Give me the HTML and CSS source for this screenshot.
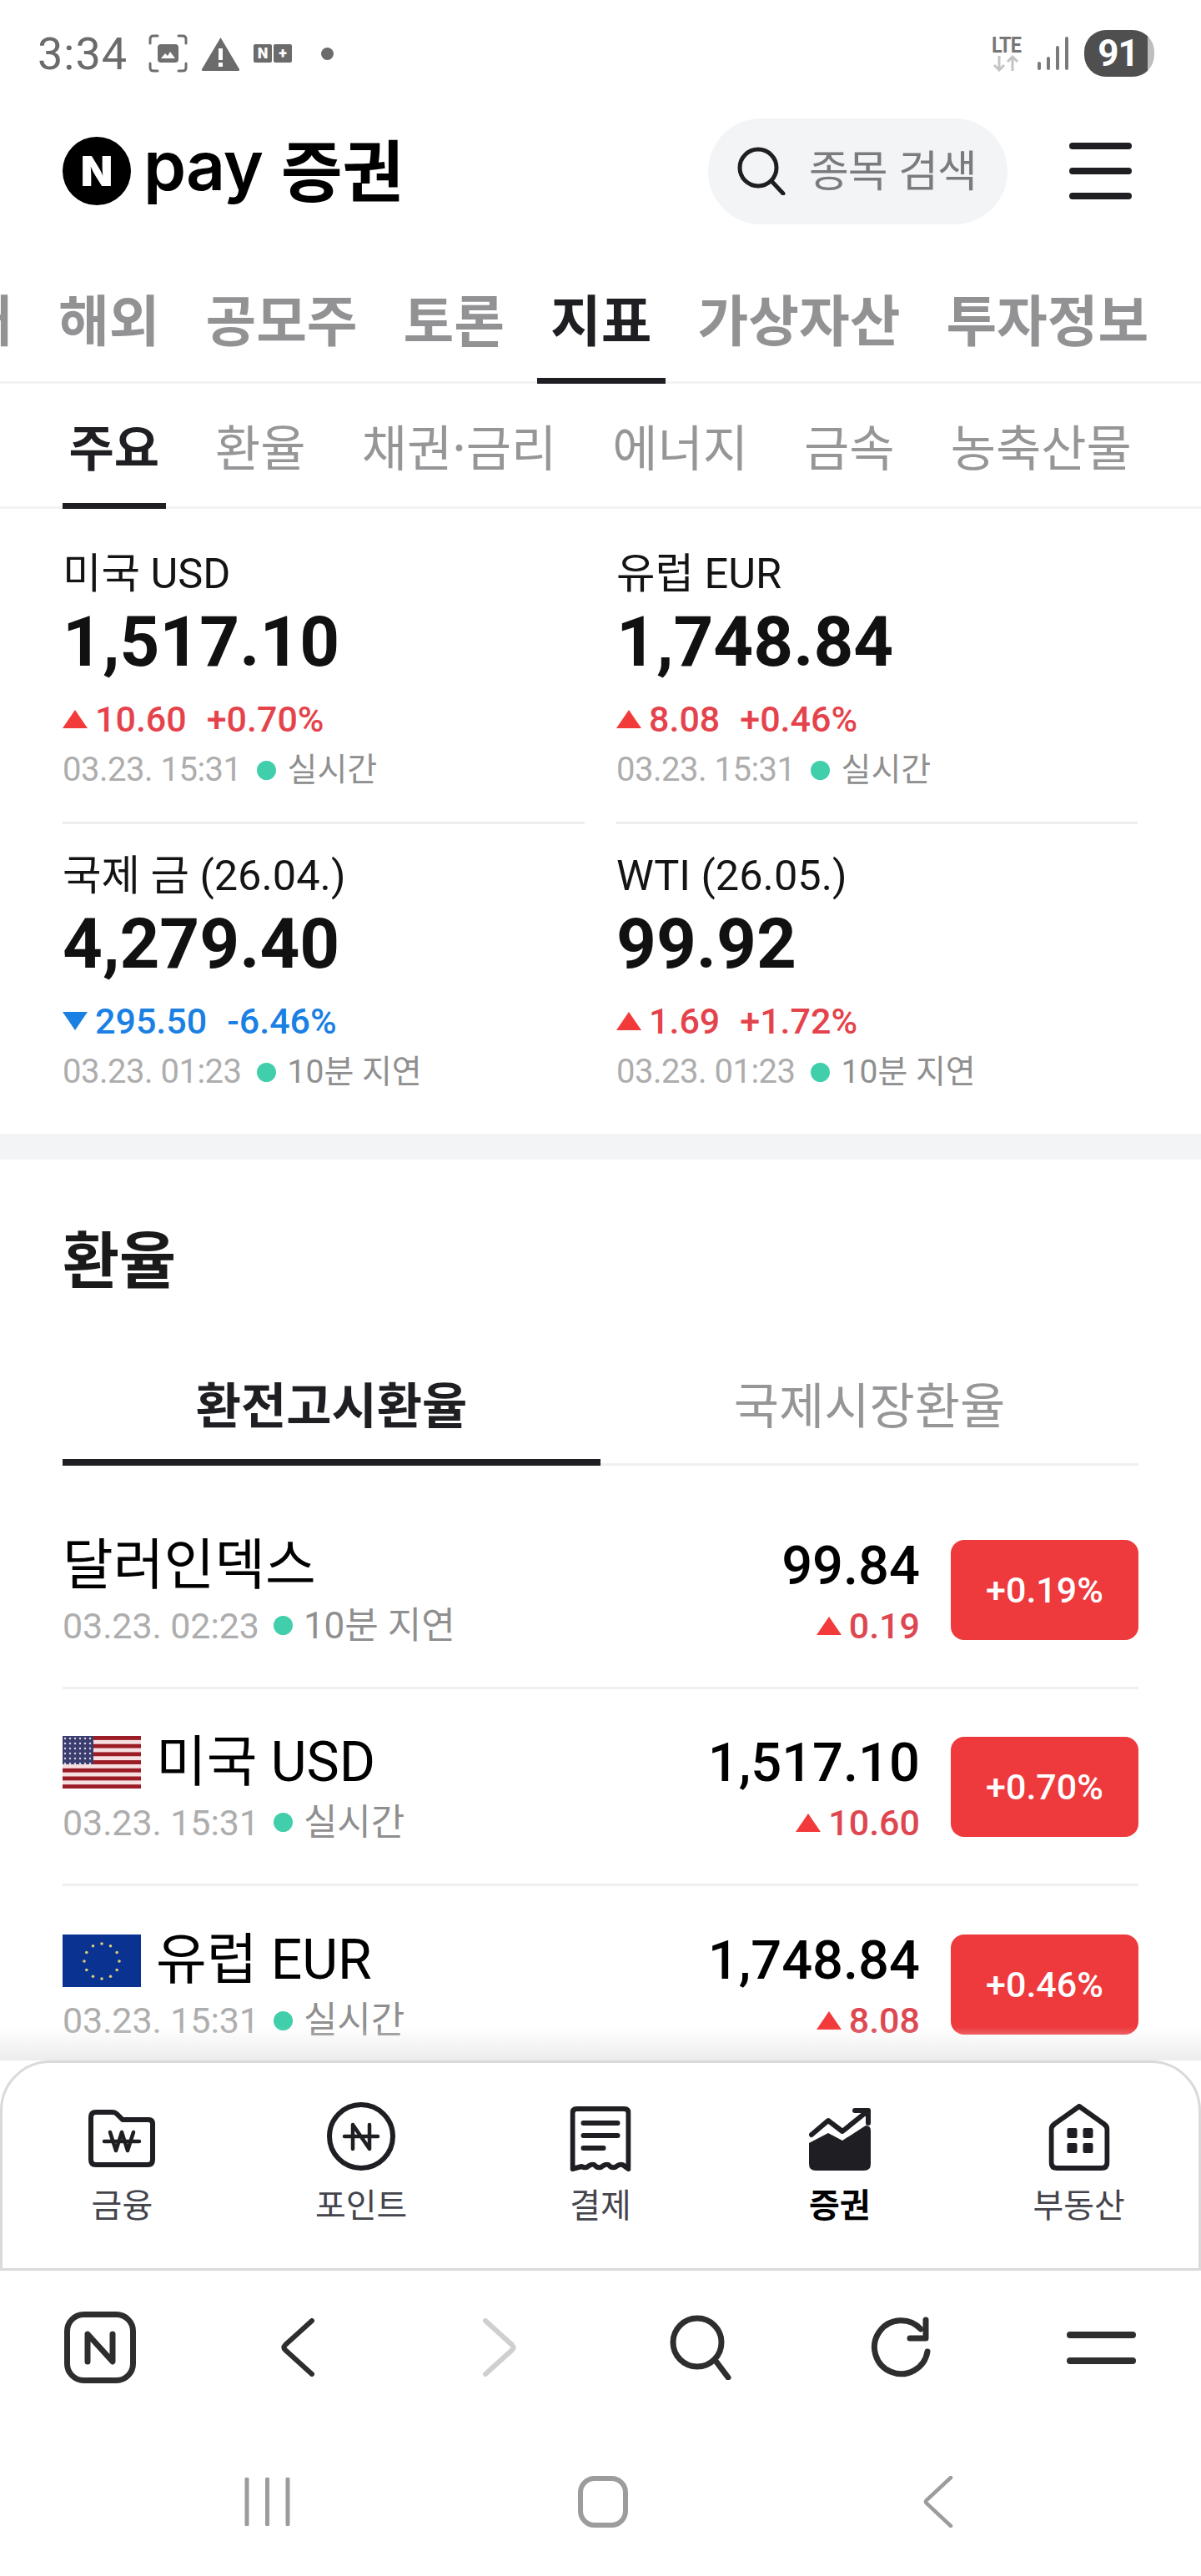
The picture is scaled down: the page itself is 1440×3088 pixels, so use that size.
FILE: index.html
```html
<!DOCTYPE html>
<html lang="ko">
<head>
<meta charset="utf-8">
<title>네이버페이 증권</title>
<link rel="stylesheet" href="styles.css">
</head>
<body>
<div class="page">
  <div class="status">
    <span class="clock">3:34</span>
    <svg class="st-shot" viewBox="0 0 47 46"><path d="M2 11V6q0-4 4-4h5M36 2h5q4 0 4 4v5M45 35v5q0 4-4 4h-5M11 44H6q-4 0-4-4v-5" fill="none" stroke="#6f6f6f" stroke-width="3" stroke-linecap="round"/><rect x="11" y="12" width="25" height="22" rx="4" fill="#6f6f6f"/><path d="M15 29l5-6 3 3 3-5 6 8z" fill="#fff"/></svg>
    <svg class="st-warn" viewBox="0 0 47 41"><path d="M23.5 1L46 39q.6 2-1.5 2h-42Q.4 41 1 39z" fill="#6b6b6b"/><rect x="21" y="14" width="5" height="14" fill="#fff"/><rect x="21" y="31" width="5" height="5" fill="#fff"/></svg>
    <span class="st-np"><span class="st-np-box">N</span><span class="st-np-box">+</span></span>
    <span class="st-dot"></span>
    <span class="st-right">
      <span class="st-lte"><span class="st-lte-t">LTE</span><svg class="st-arrows" viewBox="0 0 32 20"><path d="M8 1v17M2 12l6 6 6-6M24 19V2M18 8l6-6 6 6" fill="none" stroke="#c4c4c4" stroke-width="3"/></svg></span>
      <svg class="st-signal" viewBox="0 0 37 40"><g fill="none" stroke-width="4" stroke-linecap="round" stroke="#7a7a7a"><path d="M2 32v6M13 26v12M24 13v25M35 2v36"/></g></svg>
      <span class="st-batt">91</span>
    </span>
  </div>

  <header class="head">
    <div class="brand">
      <span class="brand-n">N</span>
      <span class="brand-pay">pay</span>
      <span class="brand-name">증권</span>
    </div>
    <div class="head-right">
      <div class="search">
        <svg class="search-ic" viewBox="0 0 58 58"><circle cx="25" cy="25" r="22" fill="none" stroke="#1e1e23" stroke-width="5"/><path d="M41 41l14 15" stroke="#1e1e23" stroke-width="5" stroke-linecap="round"/></svg>
        <span class="search-t">종목 검색</span>
      </div>
      <div class="burger"><i></i><i></i><i></i></div>
    </div>
  </header>

  <nav class="tabs">
    <a class="tab">국내</a><a class="tab">해외</a><a class="tab">공모주</a><a class="tab">토론</a><a class="tab on">지표</a><a class="tab">가상자산</a><a class="tab">투자정보</a>
  </nav>
  <nav class="subtabs">
    <a class="sub on">주요</a><a class="sub">환율</a><a class="sub">채권·금리</a><a class="sub">에너지</a><a class="sub">금속</a><a class="sub">농축산물</a>
  </nav>

  <section class="cards">
    <article class="card card-top">
      <div class="c-label">미국 USD</div>
      <div class="c-value">1,517.10</div>
      <div class="c-chg up"><i class="tri"></i><span>10.60</span><span class="c-pct">+0.70%</span></div>
      <div class="meta c-meta"><span>03.23. 15:31</span><i class="dot"></i><em>실시간</em></div>
    </article>
    <article class="card card-top">
      <div class="c-label">유럽 EUR</div>
      <div class="c-value">1,748.84</div>
      <div class="c-chg up"><i class="tri"></i><span>8.08</span><span class="c-pct">+0.46%</span></div>
      <div class="meta c-meta"><span>03.23. 15:31</span><i class="dot"></i><em>실시간</em></div>
    </article>
    <article class="card">
      <div class="c-label">국제 금 (26.04.)</div>
      <div class="c-value">4,279.40</div>
      <div class="c-chg down"><i class="tri"></i><span>295.50</span><span class="c-pct">-6.46%</span></div>
      <div class="meta c-meta"><span>03.23. 01:23</span><i class="dot"></i><em>10분 지연</em></div>
    </article>
    <article class="card">
      <div class="c-label">WTI (26.05.)</div>
      <div class="c-value">99.92</div>
      <div class="c-chg up"><i class="tri"></i><span>1.69</span><span class="c-pct">+1.72%</span></div>
      <div class="meta c-meta"><span>03.23. 01:23</span><i class="dot"></i><em>10분 지연</em></div>
    </article>
  </section>

  <div class="band"></div>

  <section class="fx">
    <h2 class="fx-title">환율</h2>
    <div class="fx-tabs">
      <a class="fx-tab on">환전고시환율</a>
      <a class="fx-tab">국제시장환율</a>
    </div>
    <div class="rows">
      <div class="row">
        <div class="r-left">
          <div class="r-name">달러인덱스</div>
          <div class="meta"><span>03.23. 02:23</span><i class="dot"></i><em>10분 지연</em></div>
        </div>
        <div class="r-right">
          <div class="r-value">99.84</div>
          <div class="r-chg"><i class="tri"></i><span>0.19</span></div>
        </div>
        <div class="badge">+0.19%</div>
      </div>
      <div class="row">
        <div class="r-left">
          <div class="r-name">
            <svg class="flag" viewBox="0 0 94 63" preserveAspectRatio="none">
              <defs><pattern id="us-st" width="94" height="9.7" patternUnits="userSpaceOnUse"><rect width="94" height="4.85" fill="#9b1b26"/><rect y="4.85" width="94" height="4.85" fill="#f6dfe0"/></pattern>
              <pattern id="us-dt" width="6" height="6" patternUnits="userSpaceOnUse"><rect width="6" height="6" fill="#3b3d6e"/><circle cx="3" cy="3" r="1.2" fill="#d8d8e6"/></pattern></defs>
              <rect width="94" height="63" fill="url(#us-st)"/><rect width="37" height="34" fill="url(#us-dt)"/>
            </svg>
            <span>미국 USD</span>
          </div>
          <div class="meta"><span>03.23. 15:31</span><i class="dot"></i><em>실시간</em></div>
        </div>
        <div class="r-right">
          <div class="r-value">1,517.10</div>
          <div class="r-chg"><i class="tri"></i><span>10.60</span></div>
        </div>
        <div class="badge">+0.70%</div>
      </div>
      <div class="row">
        <div class="r-left">
          <div class="r-name">
            <svg class="flag" viewBox="0 0 94 63" preserveAspectRatio="none">
              <rect width="94" height="63" fill="#0a3391"/>
              <g fill="#dccf78"><circle cx="47" cy="11" r="1.8"/><circle cx="57.500" cy="13.800" r="1.8"/><circle cx="65.200" cy="21.500" r="1.8"/><circle cx="68" cy="32" r="1.8"/><circle cx="65.200" cy="42.500" r="1.8"/><circle cx="57.500" cy="50.200" r="1.8"/><circle cx="47" cy="53" r="1.8"/><circle cx="36.500" cy="50.200" r="1.8"/><circle cx="28.800" cy="42.500" r="1.8"/><circle cx="26" cy="32" r="1.8"/><circle cx="28.800" cy="21.500" r="1.8"/><circle cx="36.500" cy="13.800" r="1.8"/></g>
            </svg>
            <span>유럽 EUR</span>
          </div>
          <div class="meta"><span>03.23. 15:31</span><i class="dot"></i><em>실시간</em></div>
        </div>
        <div class="r-right">
          <div class="r-value">1,748.84</div>
          <div class="r-chg"><i class="tri"></i><span>8.08</span></div>
        </div>
        <div class="badge">+0.46%</div>
      </div>
    </div>
  </section>

  <div class="dock">
    <div class="dock-shade"></div>
    <nav class="gnb">
      <a class="gnb-i">
        <svg class="ic-folder" viewBox="0 0 80 69"><g fill="none" stroke="#1e1e23" stroke-linecap="round" stroke-linejoin="round"><path stroke-width="6" d="M9 3H29q3 0 5 2l7 7H72q5 0 5 5V60q0 6-6 6H9q-6 0-6-6V9q0-6 6-6z"/><path stroke-width="4.500" d="M26 27l7 22 7-22 7 22 7-22M19 38H61"/></g></svg>
        <span>금융</span>
      </a>
      <a class="gnb-i">
        <svg class="ic-point" viewBox="0 0 82 82"><g fill="none" stroke="#1e1e23" stroke-linecap="round" stroke-linejoin="round"><circle stroke-width="6" cx="41" cy="41" r="38"/><path stroke-width="4.500" d="M31 27V56M31 27L51 56M51 27V56M21 41H61"/></g></svg>
        <span>포인트</span>
      </a>
      <a class="gnb-i">
        <svg class="ic-receipt" viewBox="0 0 73 78"><g fill="none" stroke="#1e1e23" stroke-width="6" stroke-linecap="round" stroke-linejoin="round"><path d="M3 75V8q0-5 5-5H65q5 0 5 5V75l-7-5q-3-1-6 1l-3 2q-3 1-6-1l-2-2q-3-1-6 1l-3 2q-3 1-6-1l-2-2q-3-1-6 1l-3 2q-3 1-6-1z"/><path d="M16 20H57M16 35H57M16 50H40"/></g></svg>
        <span>결제</span>
      </a>
      <a class="gnb-i gnb-on">
        <svg class="ic-chart" viewBox="0 0 74 75"><path d="M0 42L23 30 40 39 68 21q6 0 6 6V67q0 8-8 8H8q-8 0-8-8z" fill="#1e1e23"/><g fill="none" stroke="#1e1e23" stroke-width="6" stroke-linecap="round" stroke-linejoin="round"><path d="M3 32L23 15 40 28 71 3M55 3H71V18"/></g></svg>
        <span>증권</span>
      </a>
      <a class="gnb-i">
        <svg class="ic-house" viewBox="0 0 73 80"><path d="M36.500 3L66 24q4 3 4 7V70q0 7-7 7H10q-7 0-7-7V31q0-4 4-7z" fill="none" stroke="#1e1e23" stroke-width="6" stroke-linejoin="round"/><g fill="#1e1e23"><rect x="22" y="29" width="12" height="12" rx="2"/><rect x="41" y="29" width="12" height="12" rx="2"/><rect x="22" y="47" width="12" height="12" rx="2"/><rect x="41" y="47" width="12" height="12" rx="2"/></g></svg>
        <span>부동산</span>
      </a>
    </nav>
    <div class="tool">
      <svg class="t-n" viewBox="0 0 86 86"><rect x="3.500" y="3.500" width="79" height="79" rx="20" fill="none" stroke="#2e2e2e" stroke-width="7"/><path d="M28 60V27L58 60V27" fill="none" stroke="#2e2e2e" stroke-width="7" stroke-linecap="round" stroke-linejoin="round"/></svg>
      <svg class="t-ch" viewBox="0 0 42 70"><path d="M37 3L5 32q-3 3 0 6l32 29" fill="none" stroke="#2e2e2e" stroke-width="6" stroke-linecap="round"/></svg>
      <svg class="t-ch" viewBox="0 0 42 70"><path d="M5 3L37 32q3 3 0 6L5 67" fill="none" stroke="#cfcfcf" stroke-width="6" stroke-linecap="round"/></svg>
      <svg class="t-search" viewBox="0 0 74 78"><circle cx="33" cy="33" r="29" fill="none" stroke="#2e2e2e" stroke-width="7"/><path d="M55 55l15 20" stroke="#2e2e2e" stroke-width="7" stroke-linecap="round"/></svg>
      <svg class="t-reload" viewBox="0 0 72 74"><path d="M68 42A32 32 0 1 1 60 15" fill="none" stroke="#2e2e2e" stroke-width="7" stroke-linecap="round"/><path d="M66 4V26H47" fill="none" stroke="#2e2e2e" stroke-width="7" stroke-linecap="round" stroke-linejoin="round"/></svg>
      <div class="t-menu"><i></i><i></i></div>
    </div>
    <div class="sys">
      <svg class="s-bars" viewBox="0 0 56 58"><path d="M3 2V56M27.500 2V56M52 2V56" stroke="#9c9c9c" stroke-width="5" stroke-linecap="round"/></svg>
      <svg class="s-home" viewBox="0 0 60 62"><rect x="3" y="3" width="54" height="56" rx="17" fill="none" stroke="#9c9c9c" stroke-width="6"/></svg>
      <svg class="s-back" viewBox="0 0 36 62"><path d="M33 2L4 29q-2 2 0 4L33 60" fill="none" stroke="#9c9c9c" stroke-width="4.500" stroke-linecap="round"/></svg>
    </div>
  </div>
</div>
</body>
</html>
```
FILE: styles.css
```css
* { box-sizing: border-box; }
html, body { margin: 0; padding: 0; background: #fff; }
body { font-family: Roboto, "Noto Sans CJK KR", sans-serif; color: #111; }
.page { position: relative; width: 1440px; height: 3088px; overflow: hidden; background: #fff; }
a { display: block; }
i, em { font-style: normal; display: block; }

/* status bar */
.status { height: 128px; display: flex; align-items: center; padding: 0 56px 0 45px; color: #6b6b6b; }
.clock { font-size: 54px; width: 133px; letter-spacing: 1px; }
.st-shot { width: 47px; height: 46px; margin-right: 16px; }
.st-warn { width: 47px; height: 41px; margin-right: 16px; }
.st-np { display: flex; gap: 2px; }
.st-np-box { width: 22px; height: 22px; background: #6b6b6b; color: #fff; font-size: 18px; font-weight: 900; line-height: 22px; text-align: center; border-radius: 2px; }
.st-dot { width: 15px; height: 15px; border-radius: 50%; background: #6b6b6b; margin-left: 35px; }
.st-right { margin-left: auto; display: flex; align-items: center; }
.st-lte { display: flex; flex-direction: column; align-items: center; width: 42px; margin-right: 17px; }
.st-lte-t { font-size: 26px; line-height: 24px; font-weight: 700; color: #777; letter-spacing: -1px; transform: scaleX(.9); }
.st-arrows { width: 32px; height: 20px; }
.st-signal { width: 37px; height: 40px; margin-right: 19px; }
.st-batt { width: 84px; height: 56px; border-radius: 26px; background: linear-gradient(90deg, #4f4f4f 91%, #bdbdbd 91%); color: #fff; font-size: 44px; font-weight: 700; line-height: 56px; text-align: center; letter-spacing: -1px; padding-right: 3px; }

/* header */
.head { height: 154px; display: flex; align-items: center; justify-content: space-between; padding: 0 83px 0 75px; }
.brand { display: flex; align-items: center; }
.brand-n { width: 82px; height: 82px; border-radius: 50%; background: #000; color: #fff; font-family: Inter, sans-serif; font-size: 50px; font-weight: 900; line-height: 82px; text-align: center; margin-right: 15px; }
.brand-pay { font-family: Inter, sans-serif; font-size: 82px; font-weight: 600; line-height: 82px; color: #000; margin-right: 22px; letter-spacing: -1px; position: relative; top: -6px; }
.brand-name { font-family: "Noto Sans CJK KR", sans-serif; font-size: 80px; font-weight: 700; line-height: 82px; color: #000; position: relative; top: -5px; }
.head-right { display: flex; align-items: center; }
.search { width: 359px; height: 127px; border-radius: 64px; background: #f3f4f6; display: flex; align-items: center; padding-left: 35px; margin-right: 74px; }
.search-ic { width: 58px; height: 58px; margin-right: 28px; }
.search-t { font-family: "Noto Sans CJK KR", sans-serif; font-size: 52px; line-height: 60px; color: #7b7b7d; letter-spacing: -1px; white-space: nowrap; position: relative; top: -3px; }
.burger { width: 75px; display: flex; flex-direction: column; gap: 22px; }
.burger i { height: 8px; border-radius: 4px; background: #1e1e23; }

/* main tabs */
.tabs { height: 178px; margin-left: -123px; display: flex; align-items: flex-end; gap: 22px; width: 1590px; position: relative; }
.tabs::after { content: ""; position: absolute; left: 0; right: 0; bottom: 0; height: 3px; background: #f2f2f2; }
.tab { height: 150px; padding: 27px 16.500px 0; font-family: "Noto Sans CJK KR", sans-serif; font-size: 66px; line-height: 86px; font-weight: 700; color: #929294; white-space: nowrap; position: relative; z-index: 1; }
.tab.on { color: #1e1e23; border-bottom: 7px solid #1e1e23; }

/* sub tabs */
.subtabs { height: 150px; padding-left: 75px; display: flex; gap: 52px; position: relative; width: 1440px; }
.subtabs::after { content: ""; position: absolute; left: 0; right: 0; bottom: 0; height: 3px; background: #f2f2f2; }
.sub { height: 150px; padding: 34px 7.500px 0; font-family: "Noto Sans CJK KR", sans-serif; font-size: 59px; line-height: 80px; color: #969698; white-space: nowrap; position: relative; z-index: 1; }
.sub.on { color: #1e1e23; font-weight: 700; border-bottom: 7px solid #1e1e23; }

/* top cards */
.cards { display: grid; grid-template-columns: 626px 625px; column-gap: 38px; padding: 14px 75px 49px; }
.card { padding-top: 35px; }
.card-top { padding-top: 37px; padding-bottom: 37px; border-bottom: 3px solid #ededed; }
.c-label { font-size: 50.500px; line-height: 54px; color: #141414; white-space: nowrap; }
.c-value { font-size: 83.500px; line-height: 90px; font-weight: 700; color: #111; margin-top: 10px; }
.c-chg { display: flex; align-items: center; font-size: 43px; line-height: 50px; font-weight: 500; margin-top: 22px; }
.c-pct { margin-left: 24px; }
.up { color: #e5434c; }
.down { color: #1a80e4; }
.tri { width: 0; height: 0; border-left: 15px solid transparent; border-right: 15px solid transparent; margin-right: 9px; }
.up .tri, .r-chg .tri { border-bottom: 22px solid #f23a3a; }
.down .tri { border-top: 22px solid #1a80e4; }

/* meta line */
.meta { display: flex; align-items: center; font-size: 43px; line-height: 72px; color: #adadad; white-space: nowrap; }
.meta span { letter-spacing: -.1px; }
.meta em { color: #8f8f8f; font-size: 44px; }
.dot { width: 23px; height: 23px; border-radius: 50%; background: #41cfab; margin: 0 13px 0 17px; }
.meta.c-meta { margin-top: 11px; line-height: 50px; height: 50px; font-size: 40px; }
.meta.c-meta span { letter-spacing: -.5px; }
.meta.c-meta em { font-size: 39px; }
.meta.c-meta .dot { margin: 0 14px 0 18px; }

/* band */
.band { height: 31px; background: #f3f4f6; }

/* fx section */
.fx { padding: 71px 75px 0; }
.fx-title { margin: 0; font-family: "Noto Sans CJK KR", sans-serif; font-size: 74px; line-height: 90px; font-weight: 700; color: #1a1a1a; }
.fx-tabs { display: grid; grid-template-columns: 645px 645px; margin-top: 56px; border-bottom: 3px solid #f0f0f0; height: 150px; }
.fx-tab { height: 150px; text-align: center; font-family: "Noto Sans CJK KR", sans-serif; font-size: 59px; line-height: 80px; padding-top: 35px; color: #969698; }
.fx-tab.on { color: #1e1e23; font-weight: 700; border-bottom: 8px solid #1e1e23; }
.rows { padding-top: 32px; }
.row { height: 236px; display: flex; align-items: center; border-bottom: 3px solid #efefef; }
.row:last-child { border-bottom: 0; }
.r-left { flex: 1; padding-top: 14px; min-width: 0; }
.r-name { display: flex; align-items: center; gap: 18px; font-size: 66px; line-height: 72px; color: #000; white-space: nowrap; }
.flag { width: 94px; height: 63px; display: block; }
.r-right { text-align: right; margin-right: 37px; padding-top: 14px; }
.r-value { font-size: 65px; line-height: 72px; color: #000; font-weight: 500; }
.r-chg { display: flex; align-items: center; justify-content: flex-end; font-size: 43px; line-height: 72px; font-weight: 500; color: #de4650; }
.badge { width: 225px; height: 120px; border-radius: 16px; background: #ee393d; color: #fff; font-size: 43px; font-weight: 500; line-height: 120px; text-align: center; flex: none; }

/* bottom dock */
.dock { position: absolute; left: 0; right: 0; bottom: 0; height: 658px; display: flex; flex-direction: column; }
.dock-shade { height: 40px; background: linear-gradient(rgba(236,236,236,0), #ececec); position: absolute; left: 0; right: 0; top: 0; }
.dock::after { content: ""; position: absolute; left: 0; right: 0; top: 252px; bottom: 0; background: #fff; z-index: 0; }
.gnb { margin-top: 40px; height: 252px; background: #fff; border: 3px solid #dadada; border-radius: 60px 60px 0 0; display: grid; grid-template-columns: repeat(5, 1fr); position: relative; z-index: 1; flex: none; }
.gnb-i { position: relative; height: 246px; font-family: "Noto Sans CJK KR", sans-serif; font-size: 40px; line-height: 50px; color: #44444c; }
.gnb-i span { position: absolute; left: 0; right: 0; top: 143px; text-align: center; }
.gnb-on { color: #000; font-weight: 700; }
.gnb-i svg { position: absolute; left: 50%; transform: translateX(-50%); }
.ic-folder { width: 80px; height: 69px; top: 56px; }
.ic-point { width: 82px; height: 82px; top: 47px; }
.ic-receipt { width: 73px; height: 78px; top: 52px; }
.ic-chart { width: 74px; height: 75px; top: 54px; }
.ic-house { width: 73px; height: 80px; top: 49px; }
.tool { height: 184px; display: grid; grid-template-columns: repeat(6, 240px); justify-items: center; align-items: center; position: relative; z-index: 1; }
.t-n { width: 86px; height: 86px; }
.t-ch { width: 42px; height: 70px; position: relative; left: -2px; }
.t-search { width: 74px; height: 78px; }
.t-reload { width: 72px; height: 74px; }
.t-menu { width: 83px; display: flex; flex-direction: column; gap: 23px; }
.t-menu i { height: 8px; border-radius: 4px; background: #2e2e2e; }
.sys { height: 182px; padding: 4px 120px 0; display: grid; grid-template-columns: repeat(3, 402px); justify-items: center; align-items: center; position: relative; z-index: 1; }
.s-bars { width: 56px; height: 58px; }
.s-home { width: 60px; height: 62px; }
.s-back { width: 36px; height: 62px; }
```
